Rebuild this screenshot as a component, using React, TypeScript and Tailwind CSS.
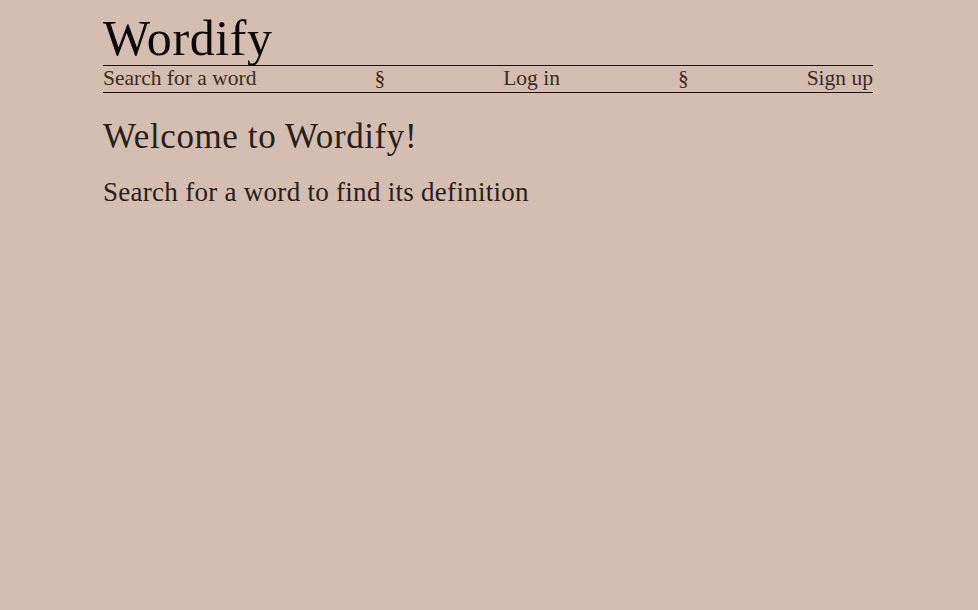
export default function App() {
  return (
    <main className="min-h-screen bg-[#d4beb2] pr-[2px] font-['Liberation_Serif',serif]">
      <section className="mx-auto w-[770px]">
        <h1 className="pt-[13px] text-[50px] leading-none tracking-[0.6px] text-[#0c0908]">
          Wordify
        </h1>

        <nav className="mt-[2px] flex items-center justify-between border-y border-[#1c1412] pb-[2px] text-[21.5px] leading-[24px] text-[#3a2b25]">
          <a href="#">Search for a word</a>
          <span>§</span>
          <a href="#">Log in</a>
          <span>§</span>
          <a href="#">Sign up</a>
        </nav>

        <h2 className="mt-[26px] text-[35px] leading-none tracking-[0.6px] text-[#2a1d18]">
          Welcome to Wordify!
        </h2>
        <p className="mt-[25px] text-[27px] leading-none tracking-[0.28px] text-[#2a1d18]">
          Search for a word to find its definition
        </p>
      </section>
    </main>
  );
}
